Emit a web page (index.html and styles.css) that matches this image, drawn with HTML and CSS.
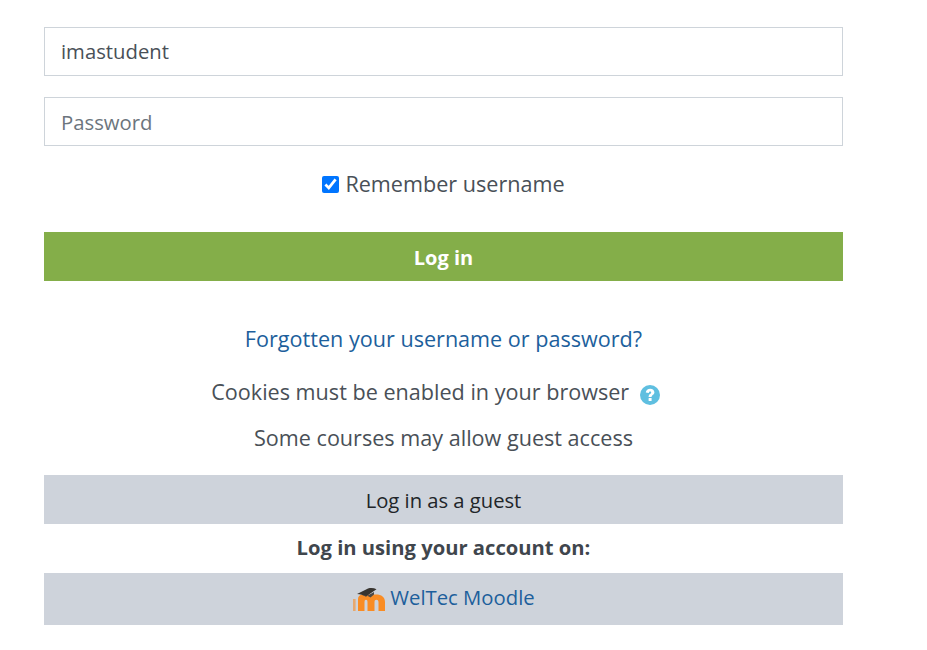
FILE: index.html
```html
<!DOCTYPE html>
<html lang="en">
<head>
  <meta charset="UTF-8" />
  <title>Log in</title>
  <link rel="stylesheet" href="styles.css">
</head>
<body>

<div class="login">
  <form class="login-form">
    <input class="field field-user" type="text" value="imastudent" />
    <input class="field" type="password" placeholder="Password" />
    <label class="remember">
      <input type="checkbox" checked />
      Remember username
    </label>
    <button class="btn btn-primary" type="button">Log in</button>
  </form>

  <p class="line forgot"><a href="#">Forgotten your username or password?</a></p>
  <p class="line cookies">
    Cookies must be enabled in your browser
    <svg class="help" width="20" height="20" viewBox="0 0 20 20">
      <circle cx="10" cy="10" r="10" fill="#5fbfe0"/>
      <path d="M5.8 7.6C6 5 7.8 3.7 10.2 3.7C12.7 3.7 14.4 5.2 14.4 7.3C14.4 10 11.6 10 11.6 12H8.6C8.6 8.8 11.2 9 11.2 7.5C11.2 6.8 10.8 6.4 10.1 6.4C9.3 6.4 8.9 7 8.8 7.9Z" fill="#fff"/>
      <rect x="8.6" y="13" width="3" height="3" rx="0.5" fill="#fff"/>
    </svg>
  </p>
  <p class="line guest-note">Some courses may allow guest access</p>
  <button class="btn btn-secondary" type="button">Log in as a guest</button>

  <p class="line providers">Log in using your account on:</p>
  <a class="btn btn-secondary provider" href="#">
    <svg class="moodle-logo" width="34" height="25" viewBox="0 0 34 25">
      <path d="M6 24V12C6 9 8 7.5 11 7.5H24C29.5 7.5 33 10 33 15V24H26.5V15.5C26.5 13.5 25.5 12.8 24.5 12.8C23 12.8 22.5 13.5 22.5 15.5V24H15.5V15.5C15.5 13.5 15 12.8 14 12.8C13 12.8 12.5 13.5 12.5 15.5V24Z" fill="#f98c24"/>
      <path d="M1 12H3.6V24H1Z" fill="#f98c24" opacity="0.6"/>
      <path d="M5 7L16 1.5C19 0.8 22 1 24.5 2.2L14 9.5C11.5 8 8 7.2 5 7Z" fill="#38342f"/>
      <path d="M10 8.2C14 8 17 9 18.5 10.5L22 7.5V5L14 9.5Z" fill="#4c4a48"/>
    </svg>
    <span>WelTec Moodle</span>
  </a>
</div>

</body>
</html>
```

FILE: styles.css
```css
:root {
  --text: #495057;
  --border: #ced4da;
  --link: #1d5f9c;
  --green: #84ae49;
  --grey: #ced3db;
}

body {
  margin: 0;
  font-family: 'Open Sans', sans-serif;
  font-size: 21.6px;
  line-height: 30px;
  color: var(--text);
  background: #fff;
}

.login {
  width: 799px;
  margin-left: 44px;
  padding-top: 27px;
  text-align: center;
}

.login-form {
  display: flex;
  flex-direction: column;
}

.field {
  box-sizing: border-box;
  height: 49px;
  margin-bottom: 21px;
  padding: 0 16px;
  border: 1px solid var(--border);
  border-radius: 0;
  font-family: inherit;
  font-size: 20.3px;
  color: var(--text);
  outline: none;
}

.field-user {
  padding-bottom: 2px;
}

.field::placeholder {
  color: #6c757d;
  opacity: 1;
}

.remember {
  display: flex;
  align-items: center;
  justify-content: center;
  gap: 6px;
  height: 30px;
  margin: 2px 0 33px;
}

.remember input {
  width: 17px;
  height: 17px;
  margin: 0;
}

.btn {
  display: block;
  box-sizing: border-box;
  width: 100%;
  height: 49px;
  border: none;
  border-radius: 0;
  font-family: inherit;
  font-size: 20.2px;
  text-decoration: none;
}

.btn-primary {
  padding-top: 2px;
  background: var(--green);
  color: #fff;
  font-weight: 700;
  font-size: 20px;
}

.btn-secondary {
  background: var(--grey);
  color: #212529;
}

.line {
  margin: 0;
}

a {
  color: var(--link);
  text-decoration: none;
}

.forgot { margin-top: 43px; }

.cookies { margin-top: 23px; }

.help {
  vertical-align: -5px;
  margin: 0 16px 0 5px;
}

.guest-note {
  margin-top: 16px;
  margin-bottom: 22px;
}

.providers {
  margin-top: 8px;
  margin-bottom: 11px;
  font-size: 20.2px;
  font-weight: 700;
  color: #3f464d;
}

.provider {
  display: flex;
  align-items: center;
  justify-content: center;
  gap: 4px;
  height: 52px;
  padding-bottom: 4px;
  font-size: 20.3px;
  color: var(--link);
}

.moodle-logo {
  margin-top: 4px;
  filter: blur(0.5px);
}
```
